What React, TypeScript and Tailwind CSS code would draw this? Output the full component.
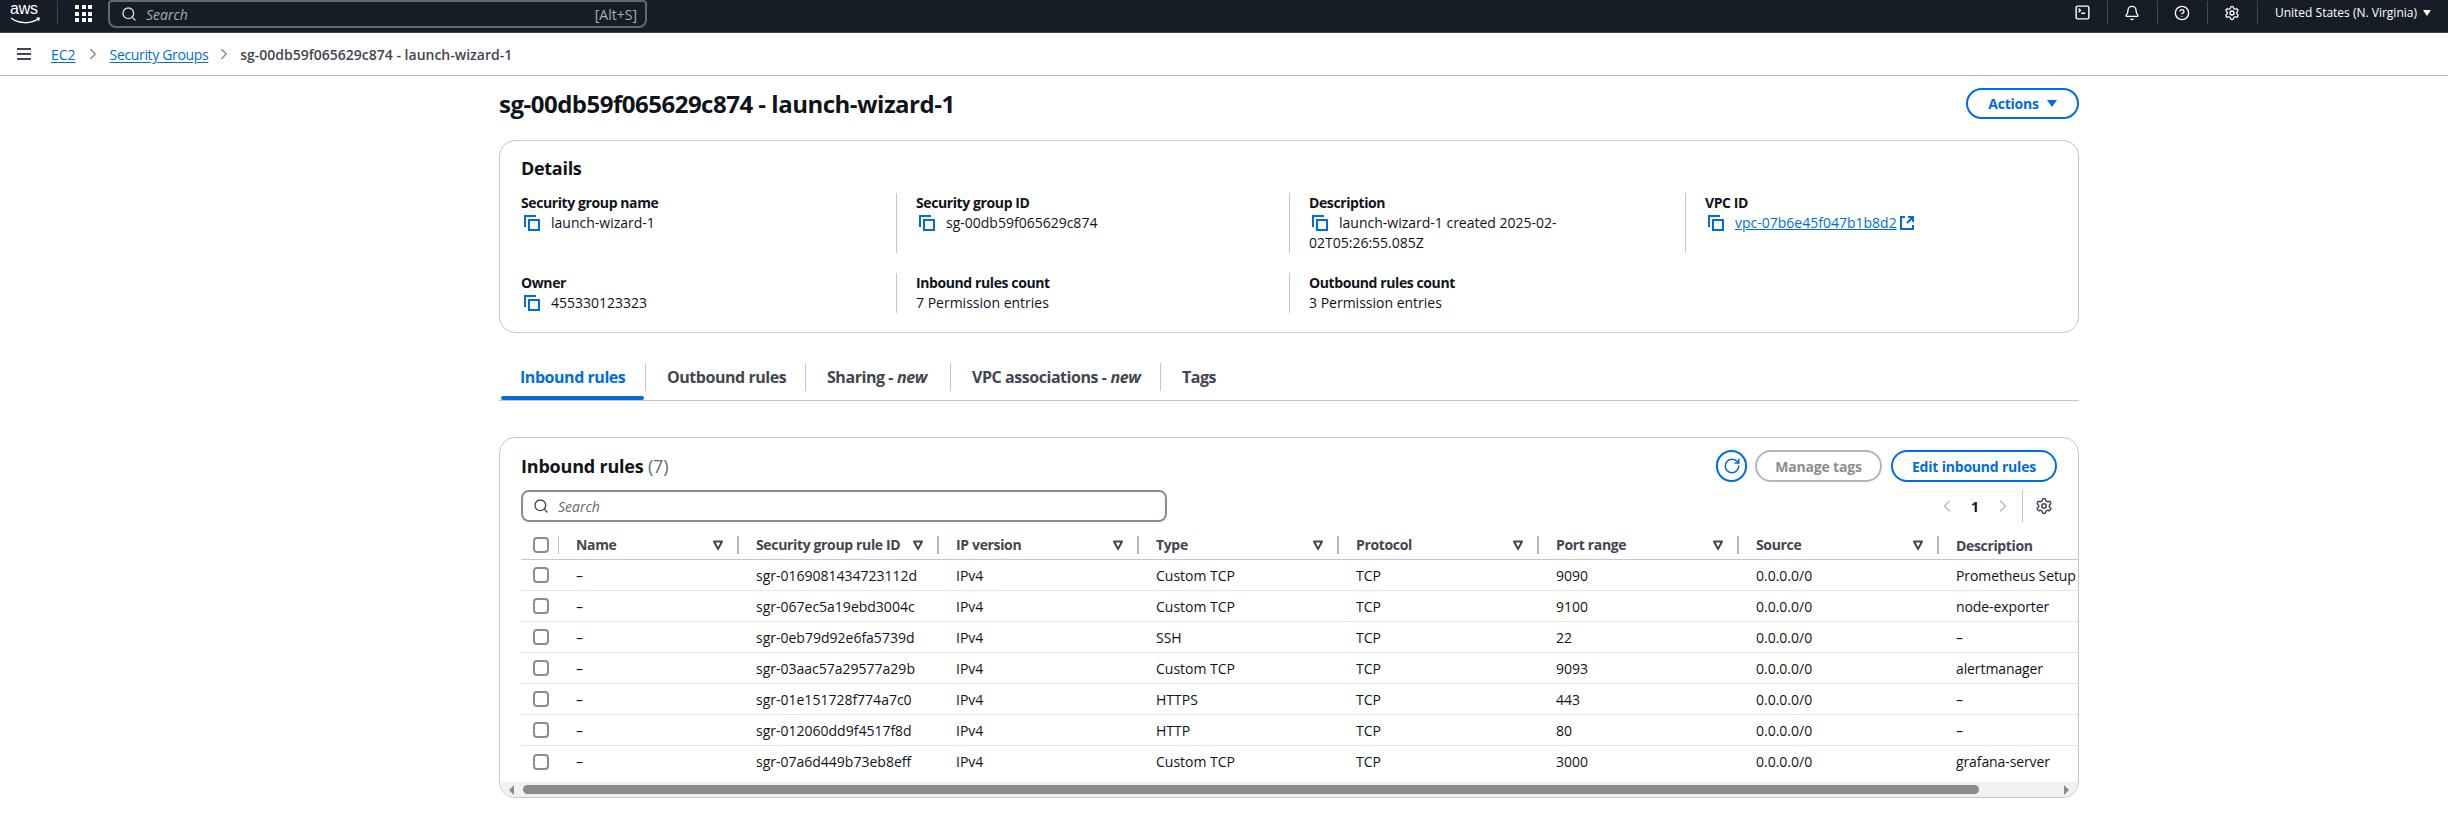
import { Bell, ChevronLeft, ChevronRight, CircleHelp, RotateCw, Search, Settings, SquareTerminal } from "lucide-react";

const RULES = [
  { id: "sgr-0169081434723112d", type: "Custom TCP", port: "9090", desc: "Prometheus Setup" },
  { id: "sgr-067ec5a19ebd3004c", type: "Custom TCP", port: "9100", desc: "node-exporter" },
  { id: "sgr-0eb79d92e6fa5739d", type: "SSH", port: "22", desc: "–" },
  { id: "sgr-03aac57a29577a29b", type: "Custom TCP", port: "9093", desc: "alertmanager" },
  { id: "sgr-01e151728f774a7c0", type: "HTTPS", port: "443", desc: "–" },
  { id: "sgr-012060dd9f4517f8d", type: "HTTP", port: "80", desc: "–" },
  { id: "sgr-07a6d449b73eb8eff", type: "Custom TCP", port: "3000", desc: "grafana-server" },
];

const COLUMNS = ["Name", "Security group rule ID", "IP version", "Type", "Protocol", "Port range", "Source"];
const GRID = "grid grid-cols-[38px_180px_200px_200px_200px_200px_200px_200px_1fr]";

function CopyIcon() {
  return (
    <svg width="16" height="16" viewBox="0 0 16 16" fill="none" stroke="#006ce0" strokeWidth="2" className="mr-[11px] ml-[3px] inline-block shrink-0 align-[-3px]">
      <path d="M1 12V1h11" />
      <rect x="5" y="5" width="10" height="10" />
    </svg>
  );
}

function SortIcon() {
  return (
    <svg width="10" height="10" viewBox="0 0 10 10" fill="none" stroke="#424650" strokeWidth="2" strokeLinejoin="round">
      <path d="M1 1.5h8L5 9z" />
    </svg>
  );
}

function Checkbox() {
  return <span className="block h-[16px] w-[16px] rounded-[4px] border-2 border-[#8c8c94] bg-white" />;
}

function TopIcon({ children }: { children: React.ReactNode }) {
  return (
    <div className="flex h-[23px] w-[50px] items-center justify-center border-r border-[#424650]">
      {children}
    </div>
  );
}

function Field({ label, children, first }: { label: string; children: React.ReactNode; first?: boolean }) {
  return (
    <div className={first ? "pr-[20px]" : "border-l border-[#c6c6cd] pr-[20px] pl-[19px]"}>
      <div className="text-[14px] leading-[20px] font-bold tracking-[-0.4px] text-[#0f141a]">{label}</div>
      <div className="text-[14px] leading-[20px] text-[#0f141a]">{children}</div>
    </div>
  );
}

function Tab({ label, italic, active, width }: { label: string; italic?: string; active?: boolean; width: string }) {
  return (
    <div className={`relative flex h-[28px] items-center pl-[21px] text-[16px] font-bold tracking-[-0.45px] ${width} ${active ? "text-[#006ce0]" : "border-l border-[#c6c6cd] text-[#424650]"}`}>
      {label}
      {italic && <i className="ml-[4px]">{italic}</i>}
      {active && <span className="absolute top-[33px] left-[2px] h-[4px] w-[143px] rounded-full bg-[#006ce0]" />}
    </div>
  );
}

export default function App() {
  return (
    <div className="h-[814px] overflow-hidden bg-white font-['Open_Sans',sans-serif] text-[#0f141a]">
      {/* top nav */}
      <header className="flex h-[33px] items-start border-b border-[#3d4249] bg-[#161d26] pt-px text-white">
        <div className="ml-[10px] flex h-[24px] w-[48px] flex-col border-r border-[#424650]">
          <span className="h-[15px] font-['Liberation_Sans',sans-serif] text-[16px] leading-[15px] tracking-[-0.2px]">aws</span>
          <svg width="32" height="8" viewBox="0 0 32 8" fill="none" className="mt-px">
            <path d="M1 1c8 6 20 6 27 1" stroke="#fff" strokeWidth="1.5" />
            <path d="M26 0.5l4 0-1 4z" fill="#fff" />
          </svg>
        </div>
        <div className="mt-[4px] ml-[17px] grid h-[17px] w-[17px] grid-cols-3 gap-[2.5px]">
          {Array.from({ length: 9 }).map((_, i) => (
            <span key={i} className="bg-white" />
          ))}
        </div>
        <div className="mt-[-1px] ml-[16px] flex h-[28px] w-[539px] items-center rounded-b-[8px] rounded-t-[4px] border-2 border-[#656871] pr-[8px] pl-[11px] text-[14px]">
          <Search size={16} strokeWidth={2} className="text-[#d5dbdb]" />
          <i className="ml-[9px] flex-1 text-[#a9adb5]">Search</i>
          <span className="text-[#a9adb5]">[Alt+S]</span>
        </div>
        <div className="ml-auto flex items-center">
          <TopIcon><SquareTerminal size={17} strokeWidth={2} /></TopIcon>
          <TopIcon><Bell size={16} strokeWidth={2} /></TopIcon>
          <TopIcon><CircleHelp size={16} strokeWidth={2} /></TopIcon>
          <TopIcon><Settings size={16} strokeWidth={2} /></TopIcon>
          <span className="ml-[17px] text-[12px] leading-[23px]">United States (N. Virginia)</span>
          <span className="mr-[17px] ml-[6px] h-0 w-0 border-x-[4px] border-t-[6px] border-x-transparent border-t-white" />
        </div>
      </header>

      {/* breadcrumbs */}
      <nav className="flex h-[43px] items-center border-b border-[#b4b4bb] text-[14px]">
        <div className="ml-[17px] flex w-[14px] flex-col gap-[3px]">
          <span className="h-[2px] bg-[#424650]" />
          <span className="h-[2px] bg-[#424650]" />
          <span className="h-[2px] bg-[#424650]" />
        </div>
        <a className="ml-[20px] text-[#006ce0] underline underline-offset-2">EC2</a>
        <ChevronRight size={18} className="mx-[8px] text-[#8c8c94]" />
        <a className="tracking-[-0.35px] text-[#006ce0] underline underline-offset-2">Security Groups</a>
        <ChevronRight size={18} className="mx-[7px] text-[#8c8c94]" />
        <span className="font-semibold text-[#424650]">sg-00db59f065629c874 - launch-wizard-1</span>
      </nav>

      <main className="pr-[369px] pl-[499px]">
        <div className="mt-[12px] flex h-[31px] items-center justify-between">
          <h1 className="text-[24px] leading-[30px] font-bold tracking-[-0.5px]">sg-00db59f065629c874 - launch-wizard-1</h1>
          <button className="flex h-[31px] w-[113px] items-center justify-center gap-[8px] rounded-full border-2 border-[#006ce0] text-[14px] font-bold tracking-[-0.2px] text-[#006ce0]">
            Actions
            <span className="h-0 w-0 border-x-[5px] border-t-[7px] border-x-transparent border-t-[#006ce0]" />
          </button>
        </div>

        {/* details */}
        <section className="mt-[21px] h-[193px] rounded-[16px] border border-[#c6c6cd] px-[21px]">
          <h2 className="mt-[15px] text-[18px] leading-[24px] font-bold tracking-[-0.3px]">Details</h2>
          <div className="mt-[13px] grid grid-cols-[375px_393px_396px_1fr] grid-rows-[60px_40px] gap-y-[20px]">
            <Field label="Security group name" first><CopyIcon />launch-wizard-1</Field>
            <Field label="Security group ID"><CopyIcon />sg-00db59f065629c874</Field>
            <Field label="Description"><CopyIcon />launch-wizard-1 created 2025-02-<br />02T05:26:55.085Z</Field>
            <Field label="VPC ID">
              <CopyIcon />
              <a className="text-[#006ce0] underline">vpc-07b6e45f047b1b8d2</a>
              <svg width="14" height="14" viewBox="0 0 14 14" fill="none" stroke="#006ce0" strokeWidth="2" className="ml-[3px] inline-block align-[-2px]">
                <path d="M5 1H1v12h12V9M8 1h5v5M13 1L7 7" />
              </svg>
            </Field>
            <Field label="Owner" first><CopyIcon />455330123323</Field>
            <Field label="Inbound rules count">7 Permission entries</Field>
            <Field label="Outbound rules count">3 Permission entries</Field>
          </div>
        </section>

        {/* tabs */}
        <div className="mt-[30px] flex h-[38px] items-start border-b border-[#c6c6cd]">
          <Tab label="Inbound rules" active width="w-[146px]" />
          <Tab label="Outbound rules" width="w-[160px]" />
          <Tab label="Sharing -" italic="new" width="w-[145px]" />
          <Tab label="VPC associations -" italic="new" width="w-[210px]" />
          <Tab label="Tags" width="w-[90px]" />
        </div>

        {/* inbound rules */}
        <section className="mt-[36px] h-[361px] overflow-hidden rounded-[16px] border border-[#c6c6cd]">
          <div className="px-[21px] pt-[12px]">
            <div className="flex h-[32px] items-center">
              <h2 className="text-[18px] font-bold tracking-[-0.2px]">Inbound rules <span className="font-normal text-[#656871]">(7)</span></h2>
              <button className="ml-auto flex h-[32px] w-[31px] items-center justify-center rounded-full border-2 border-[#006ce0] text-[#006ce0]">
                <RotateCw size={18} strokeWidth={2} />
              </button>
              <button className="ml-[8px] h-[32px] w-[127px] rounded-full border-2 border-[#b4b4bb] text-[14px] font-bold tracking-[-0.2px] text-[#8c8c94]">Manage tags</button>
              <button className="ml-[9px] h-[32px] w-[166px] rounded-full border-2 border-[#006ce0] text-[14px] font-bold tracking-[-0.2px] text-[#006ce0]">Edit inbound rules</button>
            </div>
            <div className="mt-[8px] flex h-[32px] items-center">
              <div className="flex h-[32px] w-[646px] items-center rounded-[8px] border-2 border-[#8c8c94] pl-[10px] text-[14px]">
                <Search size={16} strokeWidth={2} className="text-[#424650]" />
                <i className="ml-[9px] text-[#656871]">Search</i>
              </div>
              <ChevronLeft size={20} strokeWidth={1.5} className="ml-[770px] text-[#b4b4bb]" />
              <span className="ml-[10px] w-[16px] text-center text-[14px] font-bold">1</span>
              <ChevronRight size={20} strokeWidth={1.5} className="ml-[10px] text-[#b4b4bb]" />
              <span className="ml-[9px] h-[32px] w-px bg-[#c6c6cd]" />
              <Settings size={18} strokeWidth={2} className="ml-[12px] text-[#424650]" />
            </div>

            <div className="mt-[14px] mr-[-21px]">
              <div className={`${GRID} h-[24px] border-b border-[#c6c6cd] pb-[5px] text-[14px] font-bold tracking-[-0.35px] text-[#424650]`}>
                <div className="flex h-[18px] items-center justify-between pl-[12px]">
                  <Checkbox />
                  <span className="h-[18px] w-px bg-[#c6c6cd]" />
                </div>
                {COLUMNS.map((c) => (
                  <div key={c} className="flex h-[18px] items-center justify-between border-r-2 border-[#b4b4bb] pr-[14px] pl-[17px] leading-[18px]">
                    {c}
                    <SortIcon />
                  </div>
                ))}
                <div className="flex h-[18px] items-center pl-[17px]">Description</div>
              </div>
              {RULES.map((r, i) => (
                <div key={r.id} className={`${GRID} h-[31px] items-center text-[14px] ${i < RULES.length - 1 ? "border-b border-[#e8e8ea]" : ""}`}>
                  <div className="pl-[12px]"><Checkbox /></div>
                  <div className="pl-[17px]">–</div>
                  <div className="pl-[17px]">{r.id}</div>
                  <div className="pl-[17px]">IPv4</div>
                  <div className="pl-[17px]">{r.type}</div>
                  <div className="pl-[17px]">TCP</div>
                  <div className="pl-[17px]">{r.port}</div>
                  <div className="pl-[17px]">0.0.0.0/0</div>
                  <div className="whitespace-nowrap pl-[17px] tracking-[-0.1px]">{r.desc}</div>
                </div>
              ))}
            </div>
          </div>

          {/* horizontal scrollbar */}
          <div className="mt-[5px] flex h-[15px] items-center bg-[#f1f1f1] pr-[9px] pl-[9px]">
            <span className="h-0 w-0 border-y-[5px] border-r-[5px] border-y-transparent border-r-[#8a8a8a]" />
            <span className="ml-[9px] h-[9px] w-[1456px] rounded-full bg-[#8a8a8a]" />
            <span className="ml-auto h-0 w-0 border-y-[5px] border-l-[5px] border-y-transparent border-l-[#8a8a8a]" />
          </div>
        </section>
      </main>
    </div>
  );
}
